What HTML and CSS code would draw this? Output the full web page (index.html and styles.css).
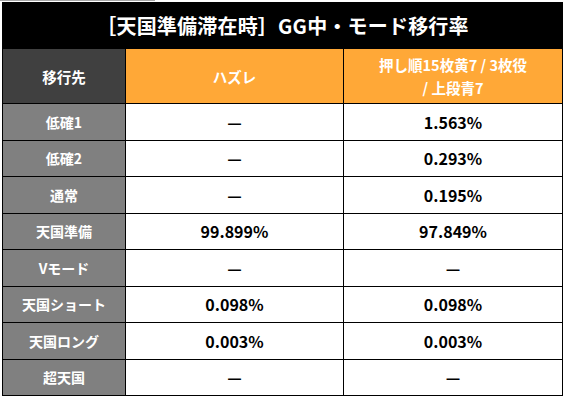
FILE: index.html
```html
<!DOCTYPE html>
<html lang="ja">
<head>
<meta charset="utf-8">
<link rel="stylesheet" href="styles.css">
</head>
<body>
<div class="topbar"></div>
<table class="rate">
  <colgroup>
    <col class="c1"><col class="c2"><col class="c3">
  </colgroup>
  <thead>
    <tr><th colspan="3" class="title">［天国準備滞在時］GG中・モード移行率</th></tr>
    <tr class="head">
      <th class="dark">移行先</th>
      <th class="orange">ハズレ</th>
      <th class="orange">押し順15枚黄7 / 3枚役<br>/ 上段青7</th>
    </tr>
  </thead>
  <tbody>
    <tr><th>低確1</th><td>—</td><td>1.563%</td></tr>
    <tr><th>低確2</th><td>—</td><td>0.293%</td></tr>
    <tr><th>通常</th><td>—</td><td>0.195%</td></tr>
    <tr><th>天国準備</th><td>99.899%</td><td>97.849%</td></tr>
    <tr><th>Vモード</th><td>—</td><td>—</td></tr>
    <tr><th>天国ショート</th><td>0.098%</td><td>0.098%</td></tr>
    <tr><th>天国ロング</th><td>0.003%</td><td>0.003%</td></tr>
    <tr><th>超天国</th><td>—</td><td>—</td></tr>
  </tbody>
</table>
</body>
</html>
```

FILE: styles.css
```css
html, body {
  margin: 0;
  padding: 0;
  background: #fff;
}
body {
  font-family: "Noto Sans CJK JP", "Noto Sans", sans-serif;
}
.topbar {
  width: 155px;
  height: 1px;
  background: #a8a8a8;
}
.rate {
  margin: 1px 0 0 2px;
  width: 560px;
  border-collapse: collapse;
  table-layout: fixed;
}
.c1 { width: 123px; }
.c2 { width: 218px; }
.c3 { width: 219px; }
.rate th, .rate td {
  border: 1px solid #000;
  padding: 0;
  text-align: center;
  vertical-align: middle;
  font-weight: bold;
}
.rate .title {
  background: #000;
  color: #fff;
  height: 45px;
  font-size: 20px;
  letter-spacing: 0.2px;
}
.rate .head th {
  height: 54px;
  color: #fff;
  font-size: 14.5px;
  line-height: 23px;
}
.rate .head .dark { background: #404040; }
.rate .head .orange { background: #ffa837; }
.rate tbody th {
  background: #808080;
  color: #fff;
  font-size: 14px;
  height: 35.5px;
}
.rate tbody td {
  background: #fff;
  color: #000;
  font-size: 16px;
  height: 35.5px;
}
```
